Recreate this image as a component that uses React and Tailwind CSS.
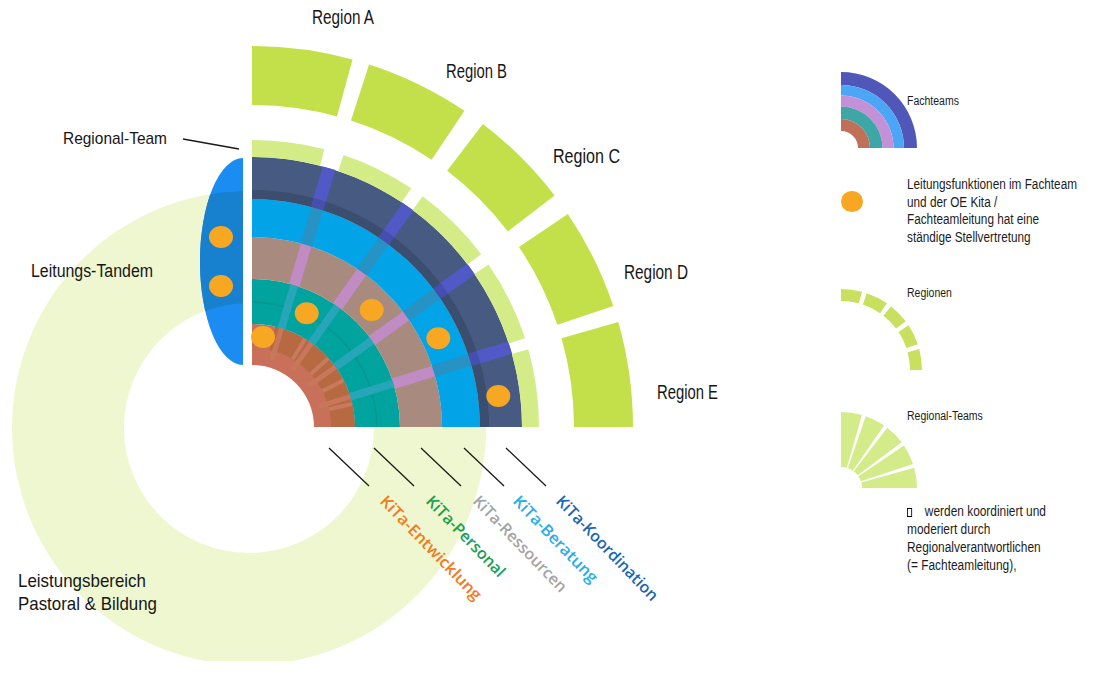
const CX = 252;
const CY = 427;

function polar(cx, cy, r, a) {
	const t = (a * Math.PI) / 180;
	return [cx + r * Math.sin(t), cy - r * Math.cos(t)];
}

function sector(r1, r2, a1, a2, cx = CX, cy = CY) {
	const [x1, y1] = polar(cx, cy, r2, a1);
	const [x2, y2] = polar(cx, cy, r2, a2);
	const [x3, y3] = polar(cx, cy, r1, a2);
	const [x4, y4] = polar(cx, cy, r1, a1);
	const inner = r1 > 0 ? `L${x3} ${y3} A${r1} ${r1} 0 0 0 ${x4} ${y4}` : `L${cx} ${cy}`;
	return `M${x1} ${y1} A${r2} ${r2} 0 0 1 ${x2} ${y2} ${inner} Z`;
}

function Spoke({ a, r1, r2, w, color }) {
	const [x1, y1] = polar(CX, CY, r1, a);
	const [x2, y2] = polar(CX, CY, r2, a);
	return <line x1={x1} y1={y1} x2={x2} y2={y2} stroke={color} strokeWidth={w} />;
}

const SPOKES = [16.6, 35.3, 54.2, 72.9];
const TEAMS = [
	[0, 14.6],
	[18.6, 33.7],
	[36.5, 53],
	[55.5, 72],
	[74.3, 90],
];
const REGIONS = [
	[0, 15.3],
	[17.9, 33.9],
	[37.3, 52.6],
	[56, 71.5],
	[74, 90],
];

// pale "Leistungsbereich" ring
const RING =
	"M12 428 a237 237 0 1 0 474 0 a237 237 0 1 0 -474 0 Z M124 428 a125 125 0 1 0 250 0 a125 125 0 1 0 -250 0 Z";
const TANDEM = "M243 158 A43 103.5 0 0 0 243 365 Z";

const label = { fontFamily: '"Liberation Sans", Arial, sans-serif', fill: "#161616" };
const kita = { fontFamily: '"Open Sans", "Noto Sans", sans-serif', fontSize: 16, fontWeight: 600 };

function Diagram() {
	const dots = [
		[263, 337],
		[306.7, 313.3],
		[371.7, 310],
		[438.3, 338.3],
		[498.3, 396],
	];
	const kitaLabels = [
		{ t: "KiTa-Entwicklung", x: 379, len: 138, c: "#f27a22" },
		{ t: "KiTa-Personal", x: 425, len: 106, c: "#14a152" },
		{ t: "KiTa-Ressourcen", x: 472, len: 127, c: "#a4a4a4" },
		{ t: "KiTa-Beratung", x: 512, len: 114, c: "#29ade8" },
		{ t: "KiTa-Koordination", x: 555, len: 139, c: "#1668b5" },
	];

	return (
		<svg width="800" height="677" className="shrink-0">
			<defs>
				<clipPath id="cut">
					<rect x="0" y="0" width="800" height="661" />
				</clipPath>
				<clipPath id="tandem">
					<path d={TANDEM} />
				</clipPath>
			</defs>

			<path d={RING} fill="#eef7d0" fillRule="evenodd" clipPath="url(#cut)" />
			<rect x="243" y="150" width="9" height="277" fill="#ffffff" />

			{/* Leitungs-Tandem */}
			<path d={TANDEM} fill="#1a8cf2" />
			<path d={RING} fill="#1780cf" fillRule="evenodd" clipPath="url(#tandem)" />
			<ellipse cx="221" cy="237" rx="12" ry="11" fill="#f8a722" />
			<ellipse cx="221" cy="286" rx="12" ry="11" fill="#f8a722" />

			{/* Fachteams */}
			<path d={sector(62, 103, 0, 90)} fill="#c8705a" />
			<path d={sector(79, 103, 13, 90)} fill="#b76a42" />
			{[31, 48, 63, 77].map((a) => (
				<Spoke key={a} a={a} r1={79} r2={103} w={4} color="#c77a5d" />
			))}
			<path d={sector(103, 148, 0, 90)} fill="#00a39e" />
			<path d={sector(124, 125.5, 0, 90)} fill="#0b958f" />
			<path d={sector(148, 190, 0, 90)} fill="#a88a7f" />
			<path d={sector(190, 228, 0, 90)} fill="#02a3e7" />
			<path d={sector(228, 270, 0, 90)} fill="#475b82" />
			<path d={sector(228, 237, 0, 90)} fill="#3b4e70" />
			{SPOKES.map((a) => (
				<g key={a}>
					<Spoke a={a} r1={70} r2={103} w={5} color="#c7785c" />
					<Spoke a={a} r1={103} r2={148} w={8} color="#26a6b8" />
					<Spoke a={a} r1={148} r2={190} w={11} color="#c18bc3" />
					<Spoke a={a} r1={190} r2={228} w={12} color="#2793c4" />
					<Spoke a={a} r1={228} r2={237} w={13} color="#464fae" />
					<Spoke a={a} r1={237} r2={270} w={13} color="#5159c6" />
				</g>
			))}

			{/* Regional-Teams */}
			{TEAMS.map(([a1, a2]) => (
				<path key={a1} d={sector(270, 287, a1, a2)} fill="#d3ec88" />
			))}

			{/* Regionen */}
			{REGIONS.map(([a1, a2]) => (
				<path key={a1} d={sector(322, 381, a1, a2)} fill="#c3e04a" />
			))}

			{dots.map(([x, y]) => (
				<ellipse key={x} cx={x} cy={y} rx="12" ry="11" fill="#f8a722" />
			))}

			{/* labels */}
			<text x="312" y="24" fontSize="20" textLength="62" lengthAdjust="spacingAndGlyphs" style={label}>
				Region A
			</text>
			<text x="446" y="78" fontSize="20" textLength="61" lengthAdjust="spacingAndGlyphs" style={label}>
				Region B
			</text>
			<text x="553" y="163" fontSize="20" textLength="67" lengthAdjust="spacingAndGlyphs" style={label}>
				Region C
			</text>
			<text x="624" y="279" fontSize="20" textLength="64" lengthAdjust="spacingAndGlyphs" style={label}>
				Region D
			</text>
			<text x="657" y="399" fontSize="20" textLength="61" lengthAdjust="spacingAndGlyphs" style={label}>
				Region E
			</text>

			<text x="63" y="144" fontSize="17" textLength="104" lengthAdjust="spacingAndGlyphs" style={label}>
				Regional-Team
			</text>
			<line x1="183" y1="139" x2="239" y2="149" stroke="#1a1a1a" strokeWidth="1.3" />
			<text x="31" y="277" fontSize="18" textLength="122" lengthAdjust="spacingAndGlyphs" style={label}>
				Leitungs-Tandem
			</text>
			<text x="18" y="587" fontSize="19" textLength="128" lengthAdjust="spacingAndGlyphs" style={label}>
				Leistungsbereich
			</text>
			<text x="18" y="610" fontSize="19" textLength="139" lengthAdjust="spacingAndGlyphs" style={label}>
				Pastoral &amp; Bildung
			</text>

			{[329, 374, 421, 464, 506].map((x) => (
				<line key={x} x1={x} y1="448" x2={x + 40} y2="486" stroke="#1a1a1a" strokeWidth="1.3" />
			))}
			{kitaLabels.map((k) => (
				<text
					key={k.t}
					transform={`translate(${k.x} 502) rotate(46)`}
					textLength={k.len}
					lengthAdjust="spacingAndGlyphs"
					fill={k.c}
					style={kita}
				>
					{k.t}
				</text>
			))}
		</svg>
	);
}

function FachteamsIcon() {
	const rings = [
		[63, 76, "#5157b9"],
		[52.5, 63, "#4ba6f5"],
		[41.5, 52.5, "#c291d8"],
		[29, 41.5, "#3fa6a6"],
		[17, 29, "#c07058"],
	];
	return (
		<svg width="76" height="76" className="overflow-visible">
			{rings.map(([r1, r2, c]) => (
				<path key={c} d={sector(r1, r2, 0, 90, 0, 76)} fill={c} />
			))}
		</svg>
	);
}

function RegionenIcon() {
	const segs = [
		[0, 15],
		[18.5, 34.5],
		[38, 53],
		[56.5, 71.5],
		[75, 90],
	];
	return (
		<svg width="82" height="81" className="overflow-visible">
			{segs.map(([a1, a2]) => (
				<path key={a1} d={sector(69, 81, a1, a2, 0, 81)} fill="#c8e05e" />
			))}
		</svg>
	);
}

function TeamsIcon() {
	const segs = [
		[0, 16],
		[19, 34.5],
		[37.5, 53],
		[56, 71.5],
		[74.5, 90],
	];
	return (
		<svg width="76" height="76" className="overflow-visible">
			{segs.map(([a1, a2]) => (
				<path key={a1} d={sector(21, 76, a1, a2, 0, 76)} fill="#d4eb8a" />
			))}
		</svg>
	);
}

function Legend() {
	return (
		<div className="ml-[41px] flex flex-col font-['Liberation_Sans',Arial,sans-serif] text-[#1c1c1c]">
			<div className="flex mt-[72px] h-[76px]">
				<div className="w-[66px] shrink-0">
					<FachteamsIcon />
				</div>
				<div className="mt-[22px] text-[12.5px] leading-[14px] origin-left scale-x-[0.84] whitespace-nowrap">
					Fachteams
				</div>
			</div>

			<div className="flex mt-[28px]">
				<div className="w-[66px] shrink-0">
					<div className="mt-[14.5px] w-[22px] h-[21px] rounded-full bg-[#f8a722]" />
				</div>
				<div className="text-[14px] leading-[17.6px] origin-left scale-x-[0.84] whitespace-nowrap">
					Leitungsfunktionen im Fachteam
					<br />
					und der OE Kita /
					<br />
					Fachteamleitung hat eine
					<br />
					ständige Stellvertretung
				</div>
			</div>

			<div className="flex mt-[40px]">
				<div className="w-[66px] shrink-0 mt-[2.5px]">
					<RegionenIcon />
				</div>
				<div className="text-[12.5px] leading-[14px] origin-left scale-x-[0.84] whitespace-nowrap">
					Regionen
				</div>
			</div>

			<div className="flex mt-[39.5px]">
				<div className="w-[66px] shrink-0 mt-[2.5px]">
					<TeamsIcon />
				</div>
				<div className="text-[12.5px] leading-[14px] origin-left scale-x-[0.84] whitespace-nowrap">
					Regional-Teams
				</div>
			</div>

			<div className="flex mt-[15.5px]">
				<div className="w-[66px] shrink-0" />
				<div className="text-[14px] leading-[17.8px] origin-left scale-x-[0.85] whitespace-nowrap">
					<span className="inline-block w-[6px] h-[9px] border-[1.5px] border-black align-[-1px]" />
					<span className="ml-[15px]">werden koordiniert und</span>
					<br />
					moderiert durch
					<br />
					Regionalverantwortlichen
					<br />
					(= Fachteamleitung),
				</div>
			</div>
		</div>
	);
}

export default function App() {
	return (
		<div className="w-[1102px] h-[677px] bg-white flex overflow-hidden">
			<Diagram />
			<Legend />
		</div>
	);
}
